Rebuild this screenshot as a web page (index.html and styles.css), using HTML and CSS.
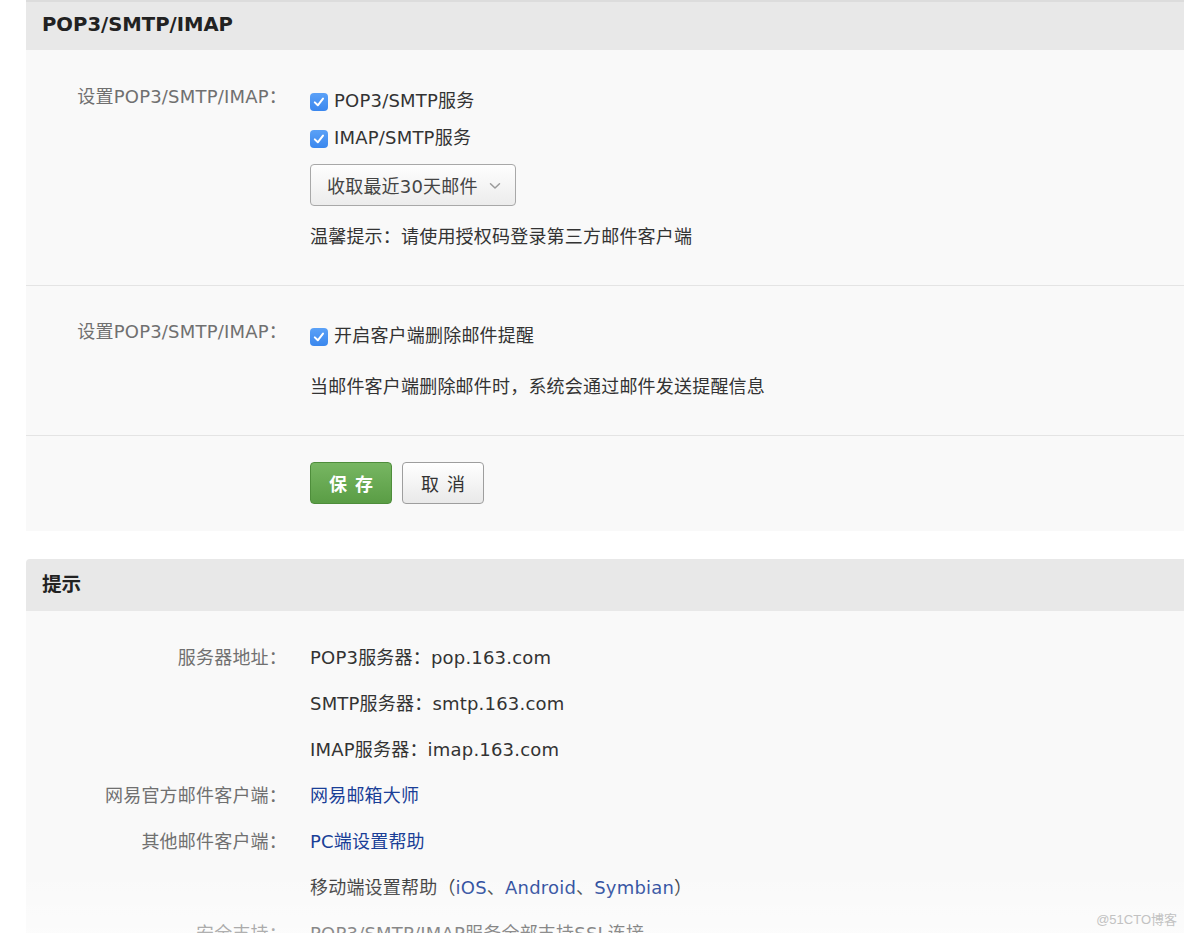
FILE: index.html
```html
<!DOCTYPE html>
<html lang="zh-CN">
<head>
<meta charset="utf-8">
<title>POP3/SMTP/IMAP</title>
<link rel="stylesheet" href="styles.css">
</head>
<body>
<div class="page">
  <section class="panel">
    <h2 class="panel-head">POP3/SMTP/IMAP</h2>
    <div class="panel-body">
      <div class="block block-a">
        <div class="field">
          <div class="label">设置POP3/SMTP/IMAP：</div>
          <div class="value">
            <label class="check"><span class="box"><svg viewBox="0 0 18 18" width="18" height="18"><path d="M4.8 9.4 L7.8 12.3 L13 5.6" fill="none" stroke="#fff" stroke-width="2" stroke-linecap="round" stroke-linejoin="round"/></svg></span>POP3/SMTP服务</label>
            <label class="check"><span class="box"><svg viewBox="0 0 18 18" width="18" height="18"><path d="M4.8 9.4 L7.8 12.3 L13 5.6" fill="none" stroke="#fff" stroke-width="2" stroke-linecap="round" stroke-linejoin="round"/></svg></span>IMAP/SMTP服务</label>
            <div class="select"><span>收取最近30天邮件</span><svg class="chev" viewBox="0 0 12 8" width="12" height="8"><path d="M1.5 1.8 L6 6 L10.5 1.8" fill="none" stroke="#9a9a9a" stroke-width="1.5" stroke-linecap="round" stroke-linejoin="round"/></svg></div>
            <p class="tip">温馨提示：请使用授权码登录第三方邮件客户端</p>
          </div>
        </div>
      </div>
      <div class="block block-b">
        <div class="field">
          <div class="label">设置POP3/SMTP/IMAP：</div>
          <div class="value">
            <label class="check"><span class="box"><svg viewBox="0 0 18 18" width="18" height="18"><path d="M4.8 9.4 L7.8 12.3 L13 5.6" fill="none" stroke="#fff" stroke-width="2" stroke-linecap="round" stroke-linejoin="round"/></svg></span>开启客户端删除邮件提醒</label>
            <p class="desc">当邮件客户端删除邮件时，系统会通过邮件发送提醒信息</p>
          </div>
        </div>
      </div>
      <div class="block block-c">
        <div class="field">
          <div class="label"></div>
          <div class="value buttons">
            <button class="btn btn-save" type="button">保存</button>
            <button class="btn btn-cancel" type="button">取消</button>
          </div>
        </div>
      </div>
    </div>
  </section>

  <section class="panel panel-tips">
    <h2 class="panel-head head-tips">提示</h2>
    <div class="panel-body tips-body">
      <div class="info">
        <div class="label">服务器地址：</div>
        <div class="value">
          <div class="line">POP3服务器：pop.163.com</div>
          <div class="line">SMTP服务器：smtp.163.com</div>
          <div class="line">IMAP服务器：imap.163.com</div>
        </div>
      </div>
      <div class="info">
        <div class="label">网易官方邮件客户端：</div>
        <div class="value"><div class="line"><a href="#">网易邮箱大师</a></div></div>
      </div>
      <div class="info">
        <div class="label">其他邮件客户端：</div>
        <div class="value">
          <div class="line"><a href="#">PC端设置帮助</a></div>
          <div class="line">移动端设置帮助（<a href="#">iOS</a>、<a href="#">Android</a>、<a href="#">Symbian</a>）</div>
        </div>
      </div>
      <div class="info">
        <div class="label">安全支持：</div>
        <div class="value"><div class="line">POP3/SMTP/IMAP服务全部支持SSL连接</div></div>
      </div>
    </div>
  </section>
</div>
<div class="fade"></div>
<div class="watermark">@51CTO博客</div>
</body>
</html>
```

FILE: styles.css
```css
html, body {
  margin: 0;
  padding: 0;
  background: #ffffff;
}
body {
  font-family: "DejaVu Sans", "Noto Sans CJK SC", sans-serif;
  font-size: 18px;
  color: #333333;
  overflow: hidden;
  height: 933px;
}
.page {
  padding-left: 26px;
}
.panel-head {
  margin: 0;
  height: 48px;
  border-top: 2px solid #dcdcdc;
  background: #e8e8e8;
  padding-left: 16px;
  font-size: 19.6px;
  font-weight: bold;
  line-height: 45px;
  color: #222222;
}
.panel-body {
  background: #f9f9f9;
}
.field, .info {
  display: grid;
  grid-template-columns: 261px 1fr;
  column-gap: 23px;
}
.label {
  text-align: right;
  color: #707070;
  line-height: 37px;
  margin-top: -4px;
  letter-spacing: 0.2px;
}
.value {
  display: flex;
  flex-direction: column;
  align-items: flex-start;
  letter-spacing: 0.2px;
}
.block-a {
  padding: 32px 0 30px;
}
.block-b {
  border-top: 1px solid #e4e4e4;
  padding: 31px 0 30px;
}
.block-c {
  border-top: 1px solid #e4e4e4;
  padding: 26px 0 27px;
}
.check {
  display: flex;
  align-items: center;
  gap: 6px;
  line-height: 37px;
  color: #333333;
}
.box {
  display: block;
  width: 18px;
  height: 18px;
  border-radius: 4px;
  background: linear-gradient(#5ba1f7, #3a87ee);
  margin-top: 2px;
}
.box svg {
  display: block;
}
.select {
  margin-top: 8px;
  box-sizing: border-box;
  width: 206px;
  height: 42px;
  border: 1px solid #a8a8a8;
  border-radius: 4px;
  background: linear-gradient(#fefefe, #ececec);
  display: flex;
  align-items: center;
  padding-left: 16px;
  gap: 11px;
  color: #444444;
}
.chev {
  display: block;
  margin-top: 2px;
}
.tip {
  margin: 12px 0 0;
  line-height: 37px;
}
.desc {
  margin: 14px 0 0;
  line-height: 37px;
}
.buttons {
  flex-direction: row;
  gap: 10px;
}
.btn {
  box-sizing: border-box;
  width: 82px;
  height: 42px;
  border-radius: 4px;
  font-family: "Noto Sans CJK SC", sans-serif;
  font-size: 18px;
  letter-spacing: 8px;
  padding: 0 0 0 8px;
  cursor: pointer;
}
.btn-save {
  border: 1px solid #4e8d3b;
  background: linear-gradient(#77b662, #5a9d45);
  color: #ffffff;
  font-weight: 600;
}
.btn-cancel {
  border: 1px solid #9e9e9e;
  background: linear-gradient(#ffffff, #e9e9e9);
  color: #333333;
  font-weight: 400;
}
.panel-tips {
  margin-top: 28px;
}
.head-tips {
  border-top: 0;
  height: 52px;
  line-height: 52px;
  border-radius: 4px 0 0 0;
}
.tips-body {
  padding-top: 24px;
  height: 400px;
}
.info .label {
  line-height: 46px;
  margin-top: 0;
}
.line {
  line-height: 46px;
  color: #333333;
}
.line a {
  color: #1a3f97;
  text-decoration: none;
}
.fade {
  position: absolute;
  left: 0;
  right: 0;
  top: 870px;
  height: 63px;
  background: linear-gradient(rgba(255,255,255,0), rgba(255,255,255,0.45));
  pointer-events: none;
}
.watermark {
  position: absolute;
  right: 7px;
  top: 909px;
  font-family: "Liberation Sans", "Noto Sans CJK SC", sans-serif;
  font-size: 13px;
  color: #c2c2c2;
}
```
